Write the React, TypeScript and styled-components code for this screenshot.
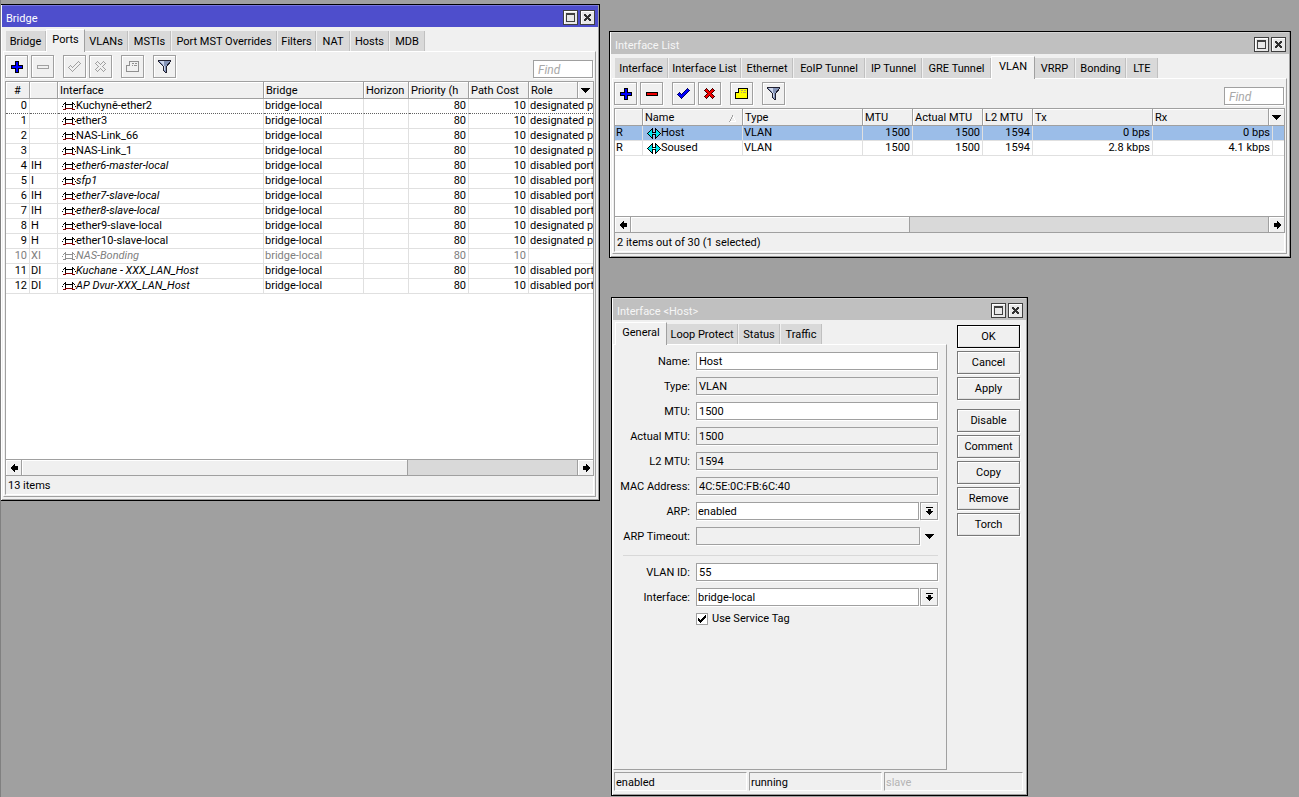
import React from "react";
import styled, { createGlobalStyle, css } from "styled-components";

const face = "#f0f0f0";
const edge = "#a0a0a0";
const grid = "#e0e0e0";
const uiFont = `Roboto, "Liberation Sans", sans-serif`;

const GlobalStyle = createGlobalStyle`
  *, *::before, *::after { box-sizing: border-box; }
  body { margin: 0; background: #a0a0a0; }
  body, button, input, select, table {
    font-family: ${uiFont};
    font-size: 11px;
    line-height: 14px;
    color: #000;
  }
  svg { display: block; shape-rendering: crispEdges; flex: none; }
`;

const Desktop = styled.main`
  position: relative;
  min-height: 100vh;
  overflow: hidden;
  background: #a0a0a0;
  border-left: 1px solid #808080;
`;

const Frame = styled.section<{ $x: number; $y: number; $w: number; $h: number }>`
  position: absolute;
  left: ${(p) => p.$x - 1}px;
  top: ${(p) => p.$y}px;
  width: ${(p) => p.$w}px;
  height: ${(p) => p.$h}px;
  display: flex;
  flex-direction: column;
  background: ${face};
  border: 1px solid #000;
  box-shadow: inset 1px 0 #fff, inset -1px -1px ${edge};
  white-space: nowrap;
`;

const TitleBar = styled.header<{ $active?: boolean }>`
  display: flex;
  align-items: center;
  gap: 2px;
  height: 22px;
  flex: none;
  margin: 0 1px;
  padding: 1px 3px 0 4px;
  background: ${(p) => (p.$active ? "#4e4ecc" : "#c0c0c0")};
  border-top: 1px solid ${(p) => (p.$active ? "#7878dc" : "#d4d4d4")};
  color: ${(p) => (p.$active ? "#fff" : "#f6f6f6")};
`;

const Title = styled.h1`
  flex: 1;
  margin: 0;
  padding-top: 3px;
  font-size: 11px;
  line-height: 14px;
  font-weight: normal;
`;

const CaptionButton = styled.button`
  display: grid;
  place-items: center;
  width: 15px;
  height: 15px;
  padding: 0;
  border: 1px solid #404040;
  background: #e8e8e8;
  box-shadow: inset 1px 1px #fff;
`;

const TabStrip = styled.div`
  display: flex;
  align-items: flex-end;
  height: 24px;
  flex: none;
  padding-left: 5px;
`;

const Tab = styled.button<{ $w: number; $active?: boolean }>`
  width: ${(p) => p.$w}px;
  height: 20px;
  padding: 1px 0 0;
  border: 0;
  border-right: 1px solid #c0c0c0;
  background: #d9d9d9;
  margin-right: 1px;
  text-align: center;
  ${(p) =>
    p.$active &&
    css`
      position: relative;
      height: 23px;
      margin: 0 0 -1px -1px;
      padding-bottom: 4px;
      background: ${face};
      border: 1px solid #fff;
      border-right-color: ${edge};
      border-bottom: 0;
    `}
`;

const Pane = styled.div`
  flex: 1;
  min-height: 0;
  display: flex;
  flex-direction: column;
  margin: 0 3px 3px 2px;
  padding: 3px 1px 1px;
  border: 1px solid #fff;
  border-right-color: ${edge};
  border-bottom-color: ${edge};
`;

const Toolbar = styled.div`
  display: flex;
  height: 26px;
  flex: none;
`;

const ToolButton = styled.button<{ $gap?: boolean }>`
  display: grid;
  place-items: center;
  width: 23px;
  height: 23px;
  padding: 0;
  margin-right: ${(p) => (p.$gap ? 9 : 3)}px;
  border: 1px solid ${edge};
  background: ${face};
  box-shadow: inset 1px 1px #fff, 1px 1px #fff;
`;

const Find = styled.input`
  width: 60px;
  height: 18px;
  margin: 5px 1px 0 auto;
  padding: 1px 4px 0;
  border: 1px solid ${edge};
  border-radius: 0;
  background: #fff;
  box-shadow: 1px 1px #fff;
  font-size: 12px;
  font-style: italic;
  outline: 0;
  &::placeholder { color: #a8a8a8; }
`;

const Listing = styled.div`
  position: relative;
  flex: 1;
  min-height: 0;
  overflow: hidden;
  background: #fff;
  border: 1px solid ${edge};
  border-bottom: 0;
`;

const Table = styled.table`
  width: 100%;
  table-layout: fixed;
  border-collapse: separate;
  border-spacing: 0;
`;

const Head = styled.th<{ $center?: boolean }>`
  height: 17px;
  padding: 1px 2px 0;
  overflow: hidden;
  background: ${face};
  border-right: 1px solid ${edge};
  border-bottom: 1px solid ${edge};
  box-shadow: inset 1px 1px #fff;
  font-weight: normal;
  line-height: 15px;
  text-align: ${(p) => (p.$center ? "center" : "left")};
  svg { float: right; margin: 5px 4px 0 0; }
  &:last-child { border-right-color: ${face}; }
`;

const HeadMenu = styled.button`
  position: absolute;
  top: 0;
  right: 0;
  display: grid;
  place-items: center;
  width: 16px;
  height: 17px;
  padding: 0;
  border: 0;
  border-left: 1px solid ${edge};
  border-bottom: 1px solid ${edge};
  background: ${face};
  box-shadow: inset 1px 1px #fff;
`;

const Row = styled.tr<{ $muted?: boolean; $selected?: boolean; $focus?: boolean }>`
  color: ${(p) => (p.$muted ? "#808080" : "#000")};
  background: ${(p) => (p.$selected ? "#9bbde8" : "#fff")};
  td {
    border-bottom-color: ${(p) => (p.$focus ? "#606060" : grid)};
    border-bottom-style: ${(p) => (p.$focus ? "dotted" : "solid")};
  }
`;

const Cell = styled.td<{ $right?: boolean; $italic?: boolean }>`
  height: 15px;
  padding: 0 2px 0 1px;
  overflow: hidden;
  border-right: 1px solid ${grid};
  border-bottom: 1px solid ${grid};
  line-height: 14px;
  text-align: ${(p) => (p.$right ? "right" : "left")};
  font-style: ${(p) => (p.$italic ? "italic" : "normal")};
  &:last-child { border-right: 0; }
`;

const Named = styled.span`
  display: flex;
  align-items: center;
  height: 14px;
  padding-left: 3px;
`;

const ScrollBar = styled.div`
  display: flex;
  height: 17px;
  flex: none;
  border: 1px solid ${edge};
  background: #d9d9d9;
`;

const ScrollButton = styled.button<{ $end?: boolean }>`
  display: grid;
  place-items: center;
  width: 16px;
  padding: 0 0 0 1px;
  border: 0 solid ${edge};
  border-width: ${(p) => (p.$end ? "0 0 0 1px" : "0 1px 0 0")};
  margin-left: ${(p) => (p.$end ? "auto" : "0")};
  background: ${face};
  box-shadow: inset 1px 1px #fff;
`;

const Thumb = styled.div<{ $w: number }>`
  width: ${(p) => p.$w}px;
  background: ${face};
  border-right: 1px solid ${edge};
  box-shadow: inset 1px 1px #fff;
`;

const Summary = styled.footer`
  height: 19px;
  flex: none;
  padding: 3px 2px 0;
  border-left: 1px solid ${edge};
  border-right: 1px solid #fff;
  border-bottom: 1px solid #fff;
`;

const DialogBody = styled.div`
  flex: 1;
  min-height: 0;
  display: flex;
`;

const DialogMain = styled.div`
  flex: 1;
  display: flex;
  flex-direction: column;
  ${TabStrip} { padding-left: 4px; }
  ${Pane} { margin: 0 0 2px 1px; padding: 7px 8px 0 9px; }
`;

const Actions = styled.div`
  display: flex;
  flex-direction: column;
  gap: 3px;
  width: 80px;
  padding: 5px 7px 0 10px;
`;

const ActionButton = styled.button<{ $primary?: boolean; $group?: boolean }>`
  width: 63px;
  height: 23px;
  padding: 1px 0 0;
  margin-top: ${(p) => (p.$group ? 6 : 0)}px;
  border: 1px solid ${(p) => (p.$primary ? "#000" : "#787878")};
  background: ${face};
  box-shadow: inset 1px 1px #fff, inset -1px -1px ${grid}, 1px 1px #fff;
`;

const Form = styled.form`
  display: flex;
  flex-direction: column;
  gap: 7px;
`;

const Field = styled.div`
  display: flex;
  height: 18px;
  label:first-child {
    width: 67px;
    margin-right: 6px;
    padding-top: 3px;
    display: flex;
    justify-content: flex-end;
  }
`;

const boxed = css`
  flex: 1;
  min-width: 0;
  height: 18px;
  margin: 0;
  padding: 1px 2px 0;
  border: 1px solid ${edge};
  border-radius: 0;
  box-shadow: 1px 1px #fff;
  outline: 0;
`;

const TextInput = styled.input`
  ${boxed}
  background: #fff;
  &:read-only { background: ${face}; }
`;

const Select = styled.select`
  ${boxed}
  padding-left: 1px;
  appearance: none;
  background: #fff;
`;

const DropButton = styled.button<{ $flat?: boolean }>`
  display: grid;
  place-items: center;
  width: ${(p) => (p.$flat ? 17 : 18)}px;
  height: 18px;
  margin-left: 1px;
  padding: 0;
  border: ${(p) => (p.$flat ? "0" : `1px solid ${edge}`)};
  background: ${face};
  box-shadow: ${(p) => (p.$flat ? "none" : "inset 1px 1px #fff, 1px 1px #fff")};
`;

const Divider = styled.hr`
  width: 100%;
  height: 1px;
  margin: 3px 0 0;
  border: 0;
  background: #d8d8d8;
`;

const Check = styled.label`
  display: flex;
  align-items: center;
  gap: 4px;
  height: 12px;
  margin-left: 73px;
  input {
    appearance: none;
    width: 12px;
    height: 12px;
    margin: 0;
    border: 1px solid ${edge};
    background: #fff;
  }
  span { position: relative; display: grid; }
  svg { position: absolute; left: 2px; top: 2px; pointer-events: none; }
`;

const StatusBar = styled.footer`
  display: flex;
  gap: 2px;
  height: 23px;
  flex: none;
  padding: 0 4px 4px 2px;
`;

const StatusCell = styled.div<{ $grow?: boolean; $muted?: boolean }>`
  width: 133px;
  height: 19px;
  flex: ${(p) => (p.$grow ? 1 : "none")};
  padding: 3px 2px 0 1px;
  border: 1px solid ${edge};
  border-right-color: #fff;
  border-bottom-color: #fff;
  color: ${(p) => (p.$muted ? "#b4b4b4" : "#000")};
`;

const BridgeIcon = ({ muted }: { muted?: boolean }) => {
  const ink = muted ? "#909090" : "#000";
  return (
    <svg width="14" height="9" viewBox="0 0 14 9" aria-hidden="true">
      <path
        fill={ink}
        d="M3 0h1v7h-1zM10 0h1v7h-1zM4 2h6v1h-6zM2 1h1v1h-1zM1 2h1v1h-1zM0 4h1v1h-1zM11 1h1v1h-1zM12 2h1v1h-1zM13 4h1v1h-1z"
      />
      <path fill={muted ? "#909090" : "#800000"} d="M3 6h8v1h-8zM1 7h3v1h-3zM10 7h3v1h-3z" />
    </svg>
  );
};

const VlanIcon = () => (
  <svg width="14" height="11" viewBox="0 0 14 11" aria-hidden="true">
    <path
      fill="#000"
      d="M5 0h1v11h-1zM4 1h1v9h-1zM3 2h1v7h-1zM2 3h1v5h-1zM1 4h1v3h-1zM0 5h1v1h-1zM8 0h1v11h-1zM9 1h1v9h-1zM10 2h1v7h-1zM11 3h1v5h-1zM12 4h1v3h-1zM13 5h1v1h-1zM6 4h2v1h-2zM6 6h2v1h-2z"
    />
    <path
      fill="#00e8f0"
      d="M4 2h1v7h-1zM3 3h1v5h-1zM2 4h1v3h-1zM1 5h1v1h-1zM5 5h1v1h-1zM9 2h1v7h-1zM10 3h1v5h-1zM11 4h1v3h-1zM12 5h1v1h-1zM8 5h1v1h-1z"
    />
  </svg>
);

const MaximizeIcon = () => (
  <svg width="9" height="9" viewBox="0 0 9 9" aria-hidden="true">
    <path fill="#404040" fillRule="evenodd" d="M0 0h9v9h-9zM1 2v6h7v-6z" />
  </svg>
);

const CloseIcon = () => (
  <svg width="7" height="7" viewBox="0 0 7 7" aria-hidden="true">
    <path
      fill="#303030"
      d="M0 0h2v1h-2zM5 0h2v1h-2zM0 1h3v1h-3zM4 1h3v1h-3zM1 2h5v1h-5zM2 3h3v1h-3zM1 4h5v1h-5zM0 5h3v1h-3zM4 5h3v1h-3zM0 6h2v1h-2zM5 6h2v1h-2z"
    />
  </svg>
);

const PlusIcon = () => (
  <svg width="12" height="12" viewBox="0 0 12 12" aria-hidden="true">
    <path d="M4 0h4v4h4v4h-4v4h-4v-4h-4v-4h4z" fill="#000" />
    <path d="M5 1h2v4h4v2h-4v4h-2v-4h-4v-2h4z" fill="#0000ff" />
  </svg>
);

const MinusIcon = ({ off }: { off?: boolean }) => (
  <svg width="12" height="4" viewBox="0 0 12 4" aria-hidden="true">
    <path d="M0 0h12v4h-12z" fill={off ? "#a0a0a0" : "#000"} />
    <path d="M1 1h10v2h-10z" fill={off ? face : "#f00000"} />
  </svg>
);

const CheckIcon = ({ off }: { off?: boolean }) => (
  <svg width="13" height="11" viewBox="0 0 13 11" aria-hidden="true">
    <path
      fill={off ? face : "#0000ff"}
      stroke={off ? "#a0a0a0" : "#000060"}
      d="M0.5 6.5L2.5 4.5L4.5 6.5L10.5 0.5L12.5 2.5L4.5 10.5Z"
    />
  </svg>
);

const CrossIcon = ({ off }: { off?: boolean }) => (
  <svg width="12" height="12" viewBox="0 0 12 12" aria-hidden="true">
    <path
      fill={off ? face : "#f00000"}
      stroke={off ? "#a0a0a0" : "#400000"}
      d="M0.5 2.5L2.5 0.5L5.5 3.5L8.5 0.5L10.5 2.5L7.5 5.5L10.5 8.5L8.5 10.5L5.5 7.5L2.5 10.5L0.5 8.5L3.5 5.5Z"
    />
  </svg>
);

const CommentIcon = ({ off }: { off?: boolean }) => (
  <svg width="13" height="11" viewBox="0 0 13 11" aria-hidden="true">
    <path
      fill={off ? "#909090" : "#000"}
      d="M3 0h10v11h-13v-7h1v-1h1v-1h1z"
    />
    <path fill={off ? face : "#ffff00"} d="M4 1h8v9h-11v-5h3z" />
    <path fill={off ? face : "#fff"} d="M3 2v2h-2v-1h1v-1z" />
    <path fill={off ? "#909090" : "#b0a860"} d="M6 2h2v1h-2zM9 2h2v1h-2zM6 4h1v1h-1zM8 4h3v1h-3z" />
  </svg>
);

const FunnelIcon = () => (
  <svg width="13" height="13" viewBox="0 0 13 13" aria-hidden="true">
    <path d="M0.5 0.5H12.5V1.5L8.5 6.5V12.5H7.5L5.5 10.5V6.5L0.5 1.5Z" fill="#8494b8" stroke="#202030" />
    <path d="M2 1h4v1h-4zM3 2h3v1h-3zM4 3h2v1h-2zM5 4h1v2h-1zM6 6h1v4h-1z" fill="#ccd6ec" />
  </svg>
);

const DownIcon = () => (
  <svg width="9" height="5" viewBox="0 0 9 5" aria-hidden="true">
    <path d="M0 0h9v1h-9zM1 1h7v1h-7zM2 2h5v1h-5zM3 3h3v1h-3zM4 4h1v1h-1z" />
  </svg>
);

const DropIcon = () => (
  <svg width="7" height="8" viewBox="0 0 7 8" aria-hidden="true">
    <path d="M0 0h7v1h-7zM2 2h3v2h-3zM0 4h7v1h-7zM1 5h5v1h-5zM2 6h3v1h-3zM3 7h1v1h-1z" />
  </svg>
);

const SideArrow = ({ right }: { right?: boolean }) => (
  <svg width="7" height="8" viewBox="0 0 7 8" aria-hidden="true">
    {right ? (
      <path d="M0 2h3v4h-3zM3 0h1v8h-1zM4 1h1v6h-1zM5 2h1v4h-1zM6 3h1v2h-1z" />
    ) : (
      <path d="M4 2h3v4h-3zM3 0h1v8h-1zM2 1h1v6h-1zM1 2h1v4h-1zM0 3h1v2h-1z" />
    )}
  </svg>
);

const SortIcon = () => (
  <svg width="7" height="7" viewBox="0 0 7 7" aria-hidden="true">
    <path d="M0 6h1v1h-1zM1 4h1v2h-1zM2 2h1v2h-1zM3 0h1v2h-1z" fill="#a0a0a0" />
    <path d="M4 1h1v2h-1zM5 3h1v2h-1zM6 5h1v2h-1zM1 6h5v1h-5z" fill="#fff" />
  </svg>
);

const TickIcon = () => (
  <svg width="8" height="8" viewBox="0 0 8 8" aria-hidden="true">
    <path d="M0 3h1v3h-1zM1 4h1v3h-1zM2 5h1v3h-1zM3 4h1v3h-1zM4 3h1v3h-1zM5 2h1v3h-1zM6 1h1v3h-1zM7 0h1v3h-1z" />
  </svg>
);

type TabDef = [string, number];

const Caption = ({ title, active }: { title: string; active?: boolean }) => (
  <TitleBar $active={active}>
    <Title>{title}</Title>
    <CaptionButton aria-label="Maximize"><MaximizeIcon /></CaptionButton>
    <CaptionButton aria-label="Close"><CloseIcon /></CaptionButton>
  </TitleBar>
);

const Tabs = ({ items, current }: { items: TabDef[]; current: string }) => (
  <TabStrip role="tablist">
    {items.map(([name, w]) => (
      <Tab key={name} role="tab" aria-selected={name === current} $w={w} $active={name === current}>
        {name}
      </Tab>
    ))}
  </TabStrip>
);

const Tools = ({ off }: { off?: boolean }) => (
  <Toolbar>
    <ToolButton aria-label="Add"><PlusIcon /></ToolButton>
    <ToolButton aria-label="Remove" $gap><MinusIcon off={off} /></ToolButton>
    <ToolButton aria-label="Enable"><CheckIcon off={off} /></ToolButton>
    <ToolButton aria-label="Disable" $gap><CrossIcon off={off} /></ToolButton>
    <ToolButton aria-label="Comment" $gap><CommentIcon off={off} /></ToolButton>
    <ToolButton aria-label="Filter"><FunnelIcon /></ToolButton>
    <Find placeholder="Find" aria-label="Find" />
  </Toolbar>
);

const Scroll = ({ thumb }: { thumb: number }) => (
  <ScrollBar>
    <ScrollButton aria-label="Scroll left"><SideArrow /></ScrollButton>
    <Thumb $w={thumb} />
    <ScrollButton aria-label="Scroll right" $end><SideArrow right /></ScrollButton>
  </ScrollBar>
);

const Columns = ({ widths }: { widths: number[] }) => (
  <colgroup>
    {widths.map((w, i) => <col key={i} width={w} />)}
    <col />
  </colgroup>
);

const bridgeTabs: TabDef[] = [
  ["Bridge", 40], ["Ports", 39], ["VLANs", 43], ["MSTIs", 42], ["Port MST Overrides", 105],
  ["Filters", 38], ["NAT", 33], ["Hosts", 38], ["MDB", 35],
];

const interfaceTabs: TabDef[] = [
  ["Interface", 53], ["Interface List", 72], ["Ethernet", 51], ["EoIP Tunnel", 71], ["IP Tunnel", 56],
  ["GRE Tunnel", 68], ["VLAN", 44], ["VRRP", 40], ["Bonding", 50], ["LTE", 31],
];

const dialogTabs: TabDef[] = [["General", 52], ["Loop Protect", 71], ["Status", 41], ["Traffic", 41]];

interface Port { flags: string; name: string; role: string }

const ports: Port[] = [
  { flags: "", name: "Kuchyně-ether2", role: "designated port" },
  { flags: "", name: "ether3", role: "designated port" },
  { flags: "", name: "NAS-Link_66", role: "designated port" },
  { flags: "", name: "NAS-Link_1", role: "designated port" },
  { flags: "IH", name: "ether6-master-local", role: "disabled port" },
  { flags: "I", name: "sfp1", role: "disabled port" },
  { flags: "IH", name: "ether7-slave-local", role: "disabled port" },
  { flags: "IH", name: "ether8-slave-local", role: "disabled port" },
  { flags: "H", name: "ether9-slave-local", role: "designated port" },
  { flags: "H", name: "ether10-slave-local", role: "designated port" },
  { flags: "XI", name: "NAS-Bonding", role: "" },
  { flags: "DI", name: "Kuchane - XXX_LAN_Host", role: "disabled port" },
  { flags: "DI", name: "AP Dvur-XXX_LAN_Host", role: "disabled port" },
];

const vlans = [
  { name: "Host", tx: "0 bps", rx: "0 bps", selected: true },
  { name: "Soused", tx: "2.8 kbps", rx: "4.1 kbps", selected: false },
];

const BridgeWindow = () => (
  <Frame $x={0} $y={4} $w={600} $h={497}>
    <Caption title="Bridge" active />
    <Tabs items={bridgeTabs} current="Ports" />
    <Pane>
      <Tools off />
      <Listing>
        <Table>
          <Columns widths={[24, 28, 206, 100, 45, 60, 60]} />
          <thead>
            <tr>
              <Head $center>#</Head><Head /><Head>Interface</Head><Head>Bridge</Head><Head>Horizon</Head>
              <Head>Priority (h</Head><Head>Path Cost</Head><Head>Role</Head>
            </tr>
          </thead>
          <tbody>
            {ports.map((p, i) => {
              const muted = p.flags === "XI";
              return (
                <Row key={p.name} $muted={muted} $focus={i === 0}>
                  <Cell $right>{i}</Cell>
                  <Cell>{p.flags}</Cell>
                  <Cell $italic={p.flags.includes("I")}>
                    <Named><BridgeIcon muted={muted} />{p.name}</Named>
                  </Cell>
                  <Cell>bridge-local</Cell>
                  <Cell />
                  <Cell $right>80</Cell>
                  <Cell $right>10</Cell>
                  <Cell>{p.role}</Cell>
                </Row>
              );
            })}
          </tbody>
        </Table>
        <HeadMenu aria-label="Columns"><DownIcon /></HeadMenu>
      </Listing>
      <Scroll thumb={386} />
      <Summary>13 items</Summary>
    </Pane>
  </Frame>
);

const InterfaceListWindow = () => (
  <Frame $x={609} $y={31} $w={682} $h={227}>
    <Caption title="Interface List" />
    <Tabs items={interfaceTabs} current="VLAN" />
    <Pane>
      <Tools />
      <Listing>
        <Table>
          <Columns widths={[28, 100, 120, 50, 70, 50, 120, 120]} />
          <thead>
            <tr>
              <Head /><Head><SortIcon />Name</Head><Head>Type</Head><Head>MTU</Head><Head>Actual MTU</Head>
              <Head>L2 MTU</Head><Head>Tx</Head><Head>Rx</Head><Head />
            </tr>
          </thead>
          <tbody>
            {vlans.map((v) => (
              <Row key={v.name} $selected={v.selected}>
                <Cell>R</Cell>
                <Cell><Named><VlanIcon />{v.name}</Named></Cell>
                <Cell>VLAN</Cell>
                <Cell $right>1500</Cell>
                <Cell $right>1500</Cell>
                <Cell $right>1594</Cell>
                <Cell $right>{v.tx}</Cell>
                <Cell $right>{v.rx}</Cell>
                <Cell />
              </Row>
            ))}
          </tbody>
        </Table>
        <HeadMenu aria-label="Columns"><DownIcon /></HeadMenu>
      </Listing>
      <Scroll thumb={279} />
      <Summary>2 items out of 30 (1 selected)</Summary>
    </Pane>
  </Frame>
);

const InputRow = ({ id, label, value, fixed }: { id: string; label: string; value: string; fixed?: boolean }) => (
  <Field>
    <label htmlFor={id}>{label}:</label>
    <TextInput id={id} defaultValue={value} readOnly={fixed} />
  </Field>
);

const SelectRow = ({ id, label, value }: { id: string; label: string; value: string }) => (
  <Field>
    <label htmlFor={id}>{label}:</label>
    <Select id={id} defaultValue={value}><option>{value}</option></Select>
    <DropButton type="button" aria-label={`Choose ${label}`}><DropIcon /></DropButton>
  </Field>
);

const HostDialog = () => (
  <Frame $x={611} $y={297} $w={417} $h={499}>
    <Caption title="Interface <Host>" />
    <DialogBody>
      <DialogMain>
        <Tabs items={dialogTabs} current="General" />
        <Pane>
          <Form>
            <InputRow id="name" label="Name" value="Host" />
            <InputRow id="type" label="Type" value="VLAN" fixed />
            <InputRow id="mtu" label="MTU" value="1500" />
            <InputRow id="actual-mtu" label="Actual MTU" value="1500" fixed />
            <InputRow id="l2-mtu" label="L2 MTU" value="1594" fixed />
            <InputRow id="mac" label="MAC Address" value="4C:5E:0C:FB:6C:40" fixed />
            <SelectRow id="arp" label="ARP" value="enabled" />
            <Field>
              <label htmlFor="arp-timeout">ARP Timeout:</label>
              <TextInput id="arp-timeout" readOnly />
              <DropButton type="button" $flat aria-label="Set ARP Timeout"><DownIcon /></DropButton>
            </Field>
            <Divider />
            <InputRow id="vlan-id" label="VLAN ID" value="55" />
            <SelectRow id="interface" label="Interface" value="bridge-local" />
            <Check>
              <span><input type="checkbox" defaultChecked /><TickIcon /></span>
              Use Service Tag
            </Check>
          </Form>
        </Pane>
      </DialogMain>
      <Actions>
        <ActionButton $primary>OK</ActionButton>
        <ActionButton>Cancel</ActionButton>
        <ActionButton>Apply</ActionButton>
        <ActionButton $group>Disable</ActionButton>
        <ActionButton>Comment</ActionButton>
        <ActionButton>Copy</ActionButton>
        <ActionButton>Remove</ActionButton>
        <ActionButton>Torch</ActionButton>
      </Actions>
    </DialogBody>
    <StatusBar>
      <StatusCell>enabled</StatusCell>
      <StatusCell>running</StatusCell>
      <StatusCell $grow $muted>slave</StatusCell>
    </StatusBar>
  </Frame>
);

export default function App() {
  return (
    <>
      <GlobalStyle />
      <Desktop>
        <BridgeWindow />
        <InterfaceListWindow />
        <HostDialog />
      </Desktop>
    </>
  );
}
